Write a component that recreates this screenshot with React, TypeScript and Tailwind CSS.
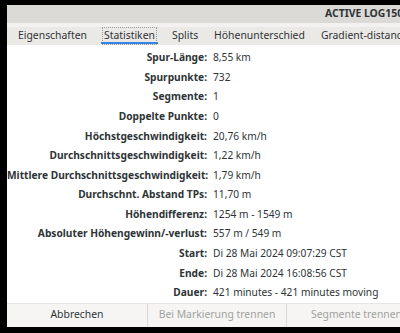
const rows: [string, string][] = [
  ["Spur-Länge:", "8,55 km"],
  ["Spurpunkte:", "732"],
  ["Segmente:", "1"],
  ["Doppelte Punkte:", "0"],
  ["Höchstgeschwindigkeit:", "20,76 km/h"],
  ["Durchschnittsgeschwindigkeit:", "1,22 km/h"],
  ["Mittlere Durchschnittsgeschwindigkeit:", "1,79 km/h"],
  ["Durchschnt. Abstand TPs:", "11,70 m"],
  ["Höhendifferenz:", "1254 m - 1549 m"],
  ["Absoluter Höhengewinn/-verlust:", "557 m / 549 m"],
  ["Start:", "Di 28 Mai 2024 09:07:29 CST"],
  ["Ende:", "Di 28 Mai 2024 16:08:56 CST"],
  ["Dauer:", "421 minutes - 421 minutes moving"],
];

const tabs = ["Eigenschaften", "Statistiken", "Splits", "Höhenunterschied", "Gradient-distance"];

export default function App() {
  return (
    <div className="w-[400px] h-[333px] bg-black overflow-hidden pt-[5px] pl-[7px] text-[10.2px] text-[#2e3436] [font-family:'Noto_Sans',sans-serif]">
      <div className="w-[420px] h-[320px] flex flex-col bg-white">
        {/* title bar */}
        <div className="h-[18px] bg-[#dcdad6] flex items-center pl-[318px] shrink-0">
          <span className="font-bold text-[10.4px] whitespace-nowrap">ACTIVE LOG150524</span>
        </div>
        <div className="h-[4px] bg-[#f3f2f0] shrink-0" />
        {/* tabs */}
        <div className="h-[18px] bg-[#ebe9e6] flex items-stretch pl-[3px] shrink-0 whitespace-nowrap text-[10.4px]">
          {tabs.map((t) => (
            <div key={t} className="relative px-[8px] flex items-center">
              <span className={t === "Statistiken" ? "outline-1 outline-dotted outline-[#999] px-[1px]" : ""}>{t}</span>
              {t === "Statistiken" && (
                <div className="absolute left-[6px] right-[6px] bottom-[1px] h-[2px] bg-[#3584e4]" />
              )}
            </div>
          ))}
        </div>
        {/* stats */}
        <div className="flex-1 bg-white pt-[3px]">
          {rows.map(([k, v]) => (
            <div key={k} className="flex h-[19.6px] items-center whitespace-nowrap">
              <div className="w-[200px] text-right font-bold shrink-0">{k}</div>
              <div className="pl-[6px]">{v}</div>
            </div>
          ))}
        </div>
        {/* buttons */}
        <div className="h-[24px] bg-[#f6f5f4] flex items-stretch border-t border-[#e8e6e3] shrink-0 whitespace-nowrap text-[10.4px]">
          <div className="w-[141px] flex items-center justify-center border-r border-[#dad8d4]">Abbrechen</div>
          <div className="w-[139px] flex items-center justify-center border-r border-[#dad8d4] text-[#a0a2a0]">Bei Markierung trennen</div>
          <div className="w-[139px] flex items-center justify-center text-[#a0a2a0]">Segmente trennen</div>
        </div>
      </div>
    </div>
  );
}
